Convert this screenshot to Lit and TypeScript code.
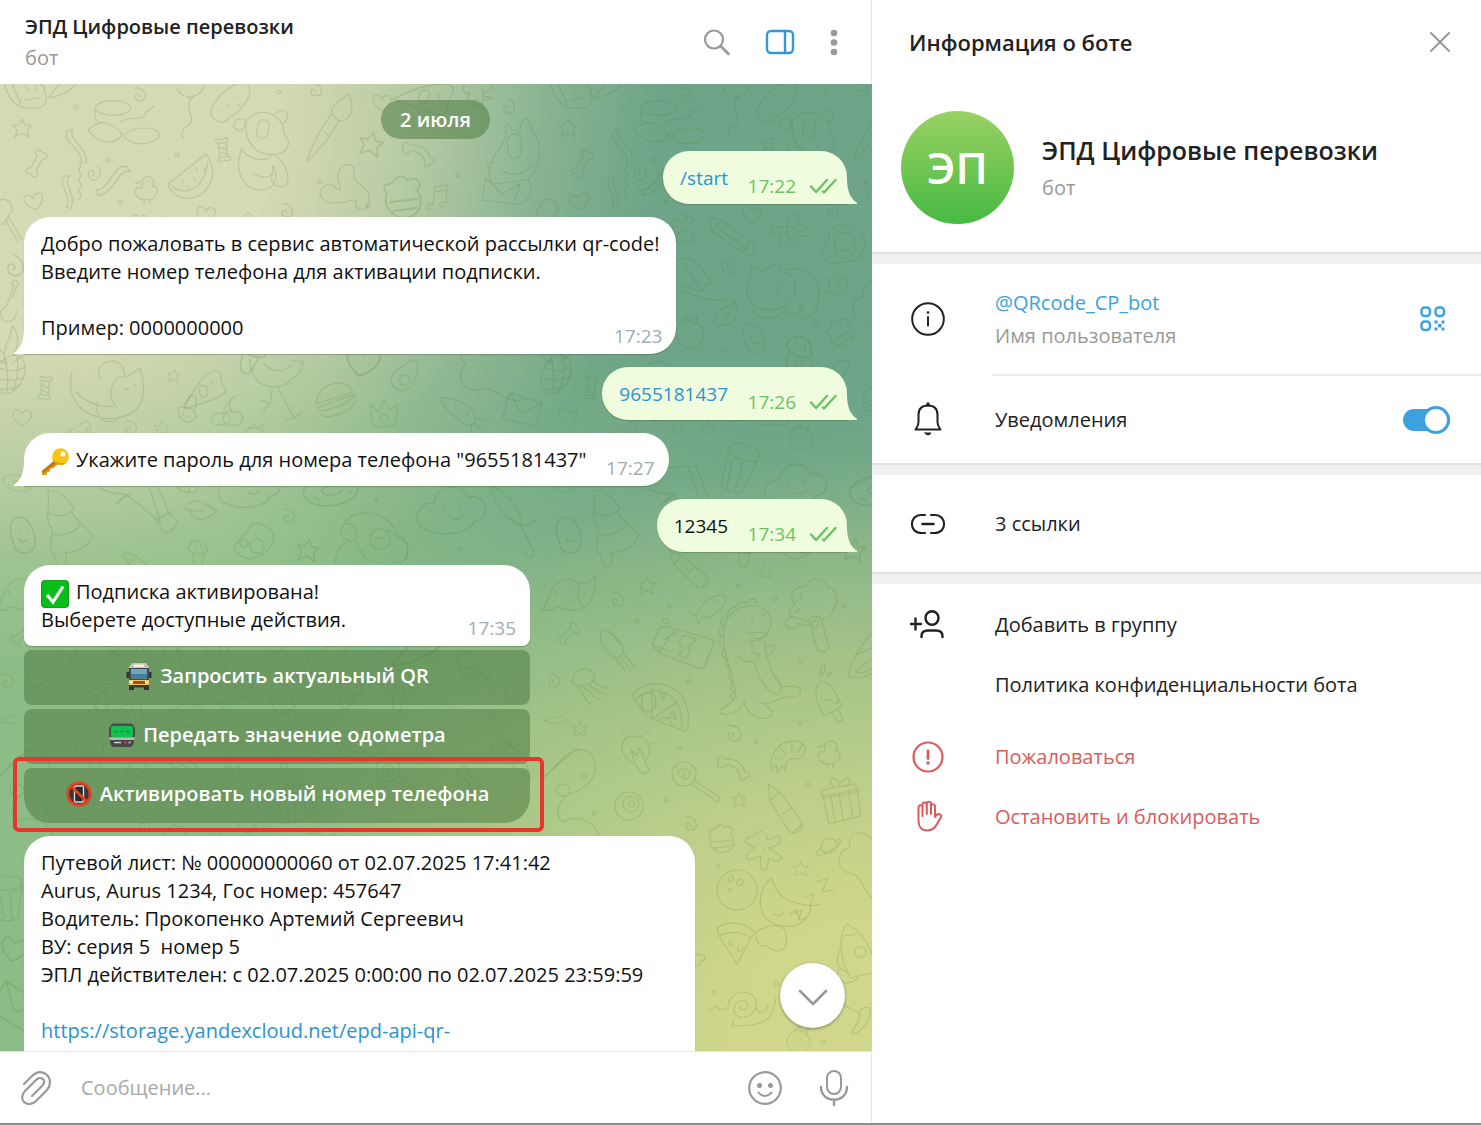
import { LitElement, html, svg, css } from 'lit';
import { customElement, property, state } from 'lit/decorators.js';
import { classMap } from 'lit/directives/class-map.js';

/* ---------- Wallpaper: line doodles on a repeating tile ---------- */

const TILE_W = 546;
const TILE_H = 1125;

const DOODLES: Record<string, string> = {
  star: 'M0-9 3-3 9-3 5 2 7 9 0 5-7 9-5 2-9-3-3-3Z',
  heart: 'M0 8C-14-1-9-10-4-8-1-7 0-4 0-4S2-9 7-7C12-5 9 3 0 8Z',
  spiral: 'M0 1C2-1-3-4-4 0-5 5 3 7 6 2 8-4 2-9-4-8',
  dot: 'M-2 0A2 2 0 1 0 2 0 2 2 0 1 0-2 0',
  bone: 'M-12-3C-16-9-8-12-7-6L7-6C8-12 16-9 12-3 16 3 8 6 7 0L-7 0C-8 6-16 3-12-3Z',
  bent: 'M-15-4C-18-10-10-12-9-7 0-8 9-4 12 6 18 6 17 13 12 12 10 17 4 14 7 9 4 1-3-2-8-1-10 4-17 2-15-4Z',
  ribbon: 'M-8-16C-16-6 8 2 5 16M-3-18C-10-8 13 0 10 16M-8-16-3-18M5 16 10 16',
  spring: 'M0-18C6-14-4-12 1-8 6-4-4-2 1 2 6 6-4 8 1 12 4 15 0 17 0 18',
  candy: 'M-4-7 4-7 4 7-4 7ZM-4-7C-9-10-5-13 0-10 5-13 9-10 4-7M-4 7C-9 10-5 13 0 10 5 13 9 10 4 7M-4-3 4 0M-4 2 4 5',
  chick: 'M-4-5A6 6 0 1 1 6-2C14-5 12 8 5 10-4 13-13 8-10 0-9-2-7-1-4-1ZM-6-8-11-6-6-5M-2 11-2 15M4 11 4 15M1-8 1-7',
  melon: 'M-22 8 16-22C30-4 20 18 2 22-10 24-20 16-22 8ZM-18 10C-8 20 14 16 18-14M-8 4-7 8M4 2 5 6M6-8 8-5M14-8 15-4M-2 10 0 13',
  pickle: 'M-20 12C-22 0 0-22 14-20 26-16 14 8-2 14-4 22-16 20-20 12ZM-4 2-3 3M6-6 7-5M-10 8-9 9M8 2 9 3',
  balloon: 'M-13-16C-10-4 10-4 14-18M-2-8 0-4 4-8M0-4C-6 8 8 14-2 22-8 24-10 32-6 34',
  bear: 'M-12-20C-4-36 26-32 26-8 36 0 28 14 14 12 2 14-14 4-12-20ZM-12-20C-20-30-30-14-20-12-16-10-14-14-12-20M18-28C26-38 36-24 24-18M-16 6C-26 32-12 50 6 48 20 46 20 30 14 24M16 12C34 26 34 48 20 44 10 42 14 32 16 24M-16 8C-6 20 10 20 14 12M-4 32C6 38 16 34 14 30M0-14A6 6 0 1 1 10-12 6 6 0 1 1 0-14',
  brush: 'M-20 36C-16 16-6-4 0-14L8-8C2 8-12 28-20 36ZM0-14C-2-26 10-28 14-36 24-24 20-8 8-8ZM-6 4 0 8',
  pizza: 'M-22 14C-12-2 4-20 14-20 24-18 14-10 22 0 24 8-2 10-22 14ZM-4-1A4 4 0 1 1 3-1 4 4 0 1 1-4-1M8-9 11-7',
  slice: 'M-18-16C-8-24 10-22 20-12L16-6 2 20-16-8ZM-16-8C-4-14 8-12 16-6M-4-4C-8 0-4 5-2 0M4 2C0 8 6 10 8 4M-1 9 2 11',
  worm: 'M-22 8C-30-2-12-10-8-2-4 2-2 0-6-10-8-30 14-30 10-14 8-4 30-6 24 14 22 24 8 20 12 10 6 10-16 18-22 8Z',
  jar: 'M-16-14A17 7 0 1 0 18-10 17 7 0 1 0-16-14M-16-12C-20 0-14 4-8 2M-24 10C-10-2 0 2 10 14 6 26-14 24-24 10ZM8 2C20-6 30 4 34-8L42-14M10 14C18 28 44 26 48 14 42 6 22 6 14 14',
  dragon: 'M-20-14C-16 4-6 14 8 12 20 14 26 4 20-4 22-8 18-12 12-14M-14-14C-8-10-12-4-6-2-10 2-2 2-4 8M2-10 4-5M12-10 13-6M2 4 14 2',
  horn: 'M-14 8C2 6 14-2 18-14M-14 8C-6-4 4-10 8-16',
  cake: 'M-12-14C-20-20-4-28 0-22 10-28 18-18 12-12M-14-12C-4-8 8-10 14-14L10 18C2 22-8 22-10 16ZM-8-6-4 18M2-8 4 20',
  dog: 'M-24 26C-34 6-16-6-10-22-12-34-8-40-4-28L4-26C4-42 14-44 16-28 30-12 22 14 12 22ZM-8-12A7 9 0 1 1 5-12 7 9 0 1 1-8-12M-26 10C-32 8-28 2-22 4M-30 20-34 42-2 46 4 26-14 36ZM-14 12C-4 20 10 16 16 6M12 22C20 34 10 48-2 46',
  envelope: 'M-18-12 16-16 20 8-14 14ZM-18-12 2 2 16-16',
  music: 'M-6 8-4-10 8-12 7 6M-6 8C-14 4-14 14-8 12M7 6C-1 2-1 12 5 10M-4-5 8-7',
  paw: 'M-8 12C-10 2 0-4 6 2 12 8 8 14 2 10-2 8-4 16-8 12ZM-9-3A3 4 0 1 1-8-4M-2-8A3 4 0 1 1-1-9M6-7A3 4 0 1 1 7-8',
  pencil: 'M-22-20-20-6 14 20C20 22 26 14 20 8L-10-16ZM-20-6-10-16M10 16 18 6M-16-10 14 14',
  plane: 'M-4-2C-2-20 10-22 8-6 24 0 24 8 8 6 2 20-16 20-8 6-26 2-22-6-4-2ZM-3 2A4 4 0 1 1 4 2 4 4 0 1 1-3 2',
  egg: 'M-14-6C-14-22 6-20 10-14 28-12 20 2 20 8 14 22-4 16-8 20-22 18-26 6-14-6ZM-8 2A10 10 0 1 1 11 2 10 10 0 1 1-8 2M-2-1-2 0M5-1 5 0M-3 4C-1 8 5 8 6 4',
  shark: 'M-30 14C-20-26 0-28 22 2L16 4 14 12-6 8M-30 14C0 10 12 22 38 16M-10-14C0-4 8 2 14 12',
  cat: 'M-30 0C-30-12-24-14-26-24L-14-18 0-28 4-18C26-16 22 18-4 20-22 20-30 14-30 0ZM8-20C34-28 52 0 36 24 24 36 18 22 26 12M-24 18C-26 30 0 32 6 22M-12-4-8-2M0-8 2-4M-4 2C-2 6 2 4 2 0M8 20C16 28 28 24 26 12',
  leaf: 'M-10 8C-12-8 2-6 10-14 14-2 10 12-4 10L-10 14M-4 10 4-2',
  berry: 'M-12-8C-20 6-8 18 4 16 16 12 18-4 8-10 2-14-8-14-12-8ZM-10-10-4-18 0-12 8-18 6-10 12-8M-6-2-6-1M2-4 2-3M-2 6-2 7M6 4 6 5M-8 4-8 5M0 11 0 12',
  bug: 'M-8-4C-4-12 8-10 10 0 8 12-8 12-10 2ZM-8-4-12-8M0-9 0-13M9-4 13-7M10 4 14 6M-9 5-13 8M-2-4 2 0M2 4 6 4M-4 4-3 5',
  bean: 'M-8-12C0-18 12-6 12 8 10 18-4 18-6 8-8 4-14-6-8-12ZM-2-2-2-1M5-2 5-1M-1 4C1 8 4 6 5 4',
  grid: 'M-14 6C-16-10-2-24 8-18 20-10 14 16 0 20-8 22-14 14-14 6ZM-12-4C-2-2 8-4 14-10M-14 6C-4 8 8 6 15 0M-8 17C0 16 8 14 12 8M-6-12C-2 0 0 10 0 20M4-18C8-6 8 6 6 16',
  girl: 'M-40-14C-48 20-20 36 6 32 36 26 34 2 28-18L16-10 4-8C-2 2-4 12 4 20M-12-6A13 13 0 1 1 12-8M-14 16C-20 34 0 42 8 30M12 2 16 4M22-2 24 0M-36 6C-24 18-10 22 4 20',
  bird: 'M-24-22C-26 10 8 14 18-2 28-4 26-14 30-18L16-20M-10-16C0-6 12-8 18-16M-2 10-4 24-14 20M-4 24-10 30M4 8 20 38 12 40M20 38 28 32',
  burger: 'M-20 0C-18-20 16-24 18-6ZM-20 4 20-4C22 0-16 14-20 4ZM-18 10C-12 20 20 12 20 0M-8-8-7-8M0-12 1-12M6-8 7-8',
  avocado: 'M4-18C14-24 14-8 10 2 6 18-14 16-12 0-10-10-2-10 4-18ZM-4 2A5 5 0 1 1 6 2 5 5 0 1 1-4 2',
  crown: 'M-12 10-14-10-6-2 0-14 6-4 14-10 12 10C4 14-6 14-12 10ZM-4 4A4 4 0 1 1 4 4 4 4 0 1 1-4 4',
  cherry: 'M-8 2A6 6 0 1 1-8 12 6 6 0 1 1-8 2M4 0A7 7 0 1 1 4 13 7 7 0 1 1 4 0M-6 2C-4-8 2-14 6-16M4 0C-2-6 0-12 6-16',
  carrot: 'M-22-16C-6-18 12-6 14 4 12 14 4 12 0 8-10 2-18-6-22-16ZM14 4 24 6M12 8 20 16M9 11 10 20M-8-12-6-8M4 4 6-2',
  tree: 'M-20-40C-8-40 0-30 6-22-2-16 16-6 24 4 24 18 2 24-2 22L-2 34C-8 40-12 34-14 24-22 20-14 6-16-2-24-8-18-20-20-40ZM-20-18C-14-12 0-14 4-20M-16 4C-4 8 10 0 12-6',
  chute: 'M-44-34C-34-8-18-2 2-2L-8 8 6-2M-44-34C-20-24 10-30 26-30L46 20M2-2 36 26M18-30 36 24M32 24 46 16 54 26C50 34 44 38 40 36Z',
  cloud: 'M-22 20C-40 16-30-8-16-4-16-22 10-24 14-10 34-14 36 10 20 12 16 24-10 26-22 20ZM-8-2-6 2M6-4 8 0M-2 8C2 12 8 10 10 6',
  camera: 'M-20 6-2-16C4-20 16-14 20-6 20 8 8 14-2 18-10 18-20 12-20 6ZM-4 6A7 7 0 1 1 10 4 7 7 0 1 1-4 6M-14 2A4 4 0 1 1-6 2 4 4 0 1 1-14 2',
  shroom: 'M-10-2C-8-14 8-14 10 0 4 4-6 4-10-2ZM-6 3-4 14C0 18 4 16 4 12L6 3M-4-6-2-4M3-6 4-3',
  monkey: 'M-28-18C-20-34 14-34 24-10 40 0 40 22 24 20M-28-18C-36-6-24 2-16-2-12-12-20-20-28-18M-2-4A10 10 0 1 1 18-2 10 10 0 1 1-2-4M-22-2C-46 10-34 34-28 34M16-12 36 2 34 16M-14 4C-8 12-8 18 0 20M2-3 12-4',
  umbrella: 'M-34-40C-16-34-2-14-4 0L-16-8M-34-40C-30-20-18-4-4 0M-4 0C10-2 12-6 8-8M-4 0 8 24C12 34 0 32 0 26',
  dino: 'M-25-35C-20-58 20-62 21-38 20-24 12-18-2-20M-5-27 17-28C14-20 4-20 0-25M1-42 3-38M12-48 14-45M-25-35C-30-10-18 10-15 30-12 42-22 44-30 50-32 58-14 56-6 42-2 60 20 62 22 54 22 48 16 46 12 43 20 46 28 38 36 37 48 38 52 34 50 28 44 24 36 28 32 26 20 16 16-6 14-20M5 3C8 20 20 36 28 34 34 30 30 22 26 16M-12-5C-8 4 8 4 9-4 8-8 2-6 2-8L2-18M16-12C24-20 28-8 18-5M-4-57C0-63 6-62 8-57M-15-52C-12-60-6-59-4-57M-23-43C-22-52-16-54-15-52M-26-33C-32-36-28-44-23-43M-27-23C-33-26-32-32-26-33M-25-11C-32-13-32-21-27-23M-22 0C-29-2-29-10-25-11M-18 11C-25 9-26 2-22 0M-16 22C-22 21-22 13-18 11M-15 32C-20 32-20 24-16 22M-16 40C-21 40-20 34-15 32',
  broccoli: 'M-22 4C-28-4-14-8-20-12-26-24-10-28-8-26-4-38 14-36 14-26 28-24 24-8 20-4 20 4 10 8 2 4M-4 8C-4 2 8 2 8 6L16 34C14 40 6 40 4 36ZM-1 11A3 4 0 1 1 5 11 3 4 0 1 1-1 11M-4 8C-12 8-12 4-14 6-18 2-28 4-27 11-25 18-14 17-15 10L-4 13M-16-12C-12-14-10-18-12-20M-18 0-13-4',
  fox: 'M-27 14C-18 12-20-14-2-18 6-20 10-12 14-14 22-12 26-18 28-22 30-8 26 6 14 12 2 16-4 10-10 10-18 16-24 12-27 14ZM14-14C8-6 12 8 18 12M-13-6-11-2M2-13 4-13M2 4 4 4',
  fish: 'M-14 10C-8-4 4-14 16-10 16 2 2 12-8 12L-12 18-14 10-20 6ZM4-6 5-5',
  chest: 'M-14-20 28-8C31-6 31-4 30-2L22 18C21 21 19 22 16 21L-24 6-31-2-24-18C-22-21-18-21-14-20ZM-24 6-8-18M-31-2-14 4M-18-8-6-15M0-12 14-8 10-4 4 0 8 4 2 12-4 8 0 2-4-4ZM-21-26C-17-32-11-26-16-23Z',
  squid: 'M-16-20C-2-16 8-4 6 4 0 10-4 8-6 6-16-2-18-12-16-20ZM6 4 18 18M3 7 14 22M0 8 8 22M-3 7 2 16M-8-18 2-6',
  jelly: 'M-14 0C-18-14 2-22 8-8 8-2 0 4-14 0ZM-10 2C-2 8-6 14 4 20M-5 2C2 6 4 12 14 16M2 0C8 6 10 8 20 10M6-3C14 2 14 4 22 4',
  half: 'M-28-12C-10-34 34-24 28 20 28 24 26 24 24 24L-8 12C-18 6-22-4-28-12ZM-24-8C-8-24 24-18 22 22M-8-19-8 12 16-4M-18-5A7 7 0 1 1-5-5 7 7 0 1 1-18-5M0-14 6-13 3-8ZM8 10 13 4 16 12ZM0 14C2 8 10 10 12 18',
  popsicle: 'M-13-4C-14-22 0-18 6-6L13 8-4 18C-10 10-13 4-13-4ZM3 14 8 24 14 22 9 10M-8 0C-4 6 0-2 3 4 6 8 10 4 9 2M-8-22C-10-28-8-34-5-34-2-28-6-24-8-22M-2-22C-2-26 2-26 4-26 2-22 0-22-2-22',
  sail: 'M-22 16C-16-8 0-30 20-40 30-20 20 10-10 18ZM-16-4 20-20M-14 12C-4 0 10-6 6 6 0 12-10 14-14 12Z',
  bulb: 'M-2 12C-20 4-18-16-4-16 14-16 16-2 8 10L12 18C8 24 4 22 2 18ZM-2 12-6-2 0 4 2-4 6 2 8 10M-20-10-23-11M14-8 17-9M-2-24-3-26M-14-20-15-22M10-20 12-22M-17 6-19 7',
  shrimp: 'M-18 14C-22 0-10-16 6-14 20-12 16 4 6 4-2 2-6 8-4 16L-8 10-12 18-14 10ZM-10-8-4 0M2-14 2-2M12-10 8-2M-16 2-8 4',
  lollipop: 'M-24-10A12 12 0 1 1 0-10 12 12 0 1 1-24-10M-18-10C-18-18-4-16-6-8-10-2-16-6-12-10M-2-4 24 14 22 18-5 0',
  eye: 'M-14 0A14 14 0 1 1 14 0 14 14 0 1 1-14 0M-6-2A8 8 0 1 1 10-2 8 8 0 1 1-6-2M0-2A3 3 0 1 1 6-2 3 3 0 1 1 0-2',
  crayon: 'M-18-24-6-16 16 14C18 24 8 28 2 22L-16-8ZM-16-8-6-16M-4 6 6 0M8 24 16 16',
  gift: 'M-18-8 16-14 20 12-12 20ZM-20-14 14-20 18-12-18-6ZM-8-18C-18-28 0-28-2-18 2-30 14-26 6-18M-10-8-6 18M-2-10 2 16M8-12 12 14',
  palette: 'M-30-10C-16-28 4-50 18-36 30-18 14 0-4 4-14 10-20 24-10 32 8 22 24 36 26 46M-17 0A7 6 0 1 1-3 0 7 6 0 1 1-17 0M8-14A3 3 0 1 1 14-14 3 3 0 1 1 8-14M-28-14 4-42',
  honey: 'M-12-2C-16 8-6 16 2 14 12 12 12 2 8-4 14-10 4-14 2-10-4-18-8-8-10-8-16-8-14-4-12-2ZM-10 4 8 2M-8 10 8 8',
  ginger: 'M-8-14C-4-22 6-18 4-10L16-14C20-8 14-4 6-2L18 6C20 12 12 12 6 8L4 20C-2 22-4 16-2 6L-14 10C-20 6-16 2-8-2L-18-8C-16-14-12-14-8-14ZM-4-12-3-11M1 0 2 1',
  planet: 'M-8 2C-8-10 6-10 8-2 8 8-6 10-8 2ZM-8 2C-18 12-8 10 0 6 10 0 16-8 8-6',
  ball: 'M-20 0A20 20 0 1 1 20 0 20 20 0 1 1-20 0M-8-12C-10-6-4-6-4-12-4-16-6-16-8-12M0-8C-2-2 6-4 6-8 6-12 2-12 0-8M-8-2C-12 4-4 2-6-2',
  moon: 'M-14-34C-8-14 4-10 24-8 20 20-16 14-22 0-28-14-22-28-14-34ZM-12 0-6 2-2-2M-22 14C-34 16-28 34-18 30-10 40 4 34 0 22 2 12-10 8-22 14ZM4 0 10-4 12 4',
  zzz: 'M-14 14-6 10-10 20-2 18M-4-2 6-6 2 6 12 4M8-18 20-22 14-8 26-10',
  rocket: 'M-12-24C4-18 16 2 18 24L-8 30C-18 10-20-10-12-24ZM-18 2C-24 14-20 22-10 24M-14-12-2-14M-3 4A5 5 0 1 1 8 4 5 5 0 1 1-3 4M-18 20C-28 34-10 40 0 30',
  snail: 'M-18 4C-20-18 12-20 10 0 6 16-14 14-12 2-10-6 2-8 2 0 0 6-8 4-6 0M-12 14-14 20C8 20 26 18 28 0M10 2C14 10 22 6 22-2M28 0 30-8M-36 4-30 0-26 4-20 2',
  glass: 'M-16-22C-8-4-2-2 8 2 16 6-2 24 2 24 12 24 22 6 20-2 14-4 10 0 8 4M-16-22-8-16',
  puff: 'M20 40C0 36 2 14-10 12-30 8-24-14-12-14-16-32 4-32 8-24L20-28',
  lens: 'M-12-6A9 9 0 1 1 2 2 9 9 0 1 1-12-6M2 2 16 26M-1 5 12 28',
  key: 'M-8 16C-14 6-2 8-2 0L4-16M-8 16C-4 24 8 18 6 8M2-4 8-18M4-16A3 3 0 1 1 8-18',
  herb: 'M-8 20C-14 4-2-4-2-18 8-8 2 4 0 12 6 4 12 0 18 2 16 10 4 14-2 20M-8 20C-16 16-20 10-18 4-12 6-8 12-8 20',
  donut: 'M-22-2C-20-16 18-16 20 0 20 14-20 14-22-2ZM-8-2C-6-6 8-6 8-1 6 4-6 3-8-2M-14 2-10 5M12 4 15 2',
};

type Spot = [string, number, number, number?, number?];

const SPOTS: Spot[] = [
  ['dragon', 24, 96], ['horn', 62, 90], ['spiral', 139, 96], ['dot', 76, 107], ['star', 22, 128], ['bone', 34, 162, 118],
  ['ribbon', 76, 147], ['jar', 112, 120], ['spring', 79, 181], ['ribbon', 67, 192, 20, 0.9], ['spiral', 93, 174, 60],
  ['ribbon', 112, 180, 75, 1.1], ['chick', 146, 189], ['heart', 34, 202, -15], ['melon', 190, 176], ['candy', 223, 150, -8],
  ['balloon', 190, 104], ['pickle', 231, 103], ['bear', 258, 142], ['spiral', 315, 91], ['brush', 330, 128, 6],
  ['star', 371, 144, 12, 1.3], ['heart', 382, 103], ['pizza', 424, 98, 30, 1.2], ['bent', 418, 152], ['worm', 344, 190],
  ['honey', 405, 196, 0, 1.5], ['dog', 516, 158], ['music', 439, 197], ['spiral', 508, 108, 20], ['dot', 458, 175],
  ['dot', 177, 155], ['dot', 108, 160], ['dot', 320, 182], ['dot', 368, 206], ['dot', 120, 202], ['dot', 279, 92],
  ['chick', 478, 90, 180, 1.3], ['heart', 206, 215], ['spiral', 286, 212],
  ['paw', 139, 230], ['pencil', 186, 236, -2], ['plane', 244, 230], ['egg', 297, 244], ['shark', 144, 278, 10],
  ['spiral', 182, 266, 160], ['cat', 231, 290], ['bug', 292, 286], ['leaf', 179, 315], ['berry', 144, 333, 0, 0.95],
  ['bean', 207, 338], ['honey', 296, 332, -25], ['shroom', 252, 352, 20, 1.4], ['dot', 270, 324], ['puff', 330, 310],
  ['dot', 179, 350], ['lens', 6, 214], ['key', 10, 302], ['spiral', 14, 268, 30, 1.4], ['herb', 14, 344],
  ['grid', 10, 374, 10], ['candy', 45, 388, 6], ['heart', 22, 418], ['girl', 112, 386], ['star', 174, 376, 8, 0.7],
  ['pizza', 204, 392, -8], ['bird', 274, 380], ['burger', 336, 401, -8], ['heart', 362, 362, 12, 1.8], ['avocado', 404, 378, 8],
  ['crown', 384, 414], ['cherry', 229, 412], ['shroom', 188, 411, 200], ['puff', 485, 372, -30, 1.1],
  ['carrot', 462, 414], ['envelope', 521, 411, 24], ['spiral', 130, 429], ['star', 162, 428, 0, 0.8], ['melon', 72, 436, 10, 0.8],
  ['berry', 255, 438, 8, 0.8], ['cake', 192, 470, 20, 1.1], ['cloud', 250, 484], ['chute', 124, 496], ['donut', 18, 484, 12, 0.7],
  ['bean', 22, 534, 10, 1.2], ['tree', 68, 530], ['leaf', 200, 509, 60], ['donut', 332, 492, -10, 1.3],
  ['spiral', 288, 517], ['camera', 254, 541], ['star', 308, 550, 8, 1.2], ['shroom', 198, 551], ['monkey', 372, 542],
  ['cloud', 452, 508, 0, 1.1], ['umbrella', 525, 526], ['dot', 376, 500], ['dot', 460, 549],
  ['crayon', 144, 568, -15, 0.9], ['star', 219, 572, 0, 0.7], ['fox', 21, 597], ['star', 101, 586, 0, 0.9],
  ['spiral', 71, 601], ['fish', 164, 606], ['broccoli', 267, 613], ['dino', 204, 660], ['chest', 137, 647], ['dot', 123, 606],
  ['dot', 298, 606], ['dot', 229, 599], ['dot', 192, 586], ['dot', 91, 621], ['bone', 24, 636, -42, 0.9], ['squid', 71, 649],
  ['jelly', 41, 684], ['spiral', 7, 682], ['half', 114, 707], ['popsicle', 283, 698], ['dot', 143, 682], ['dot', 255, 661],
  ['sail', 324, 660], ['heart', 512, 691, 20], ['bulb', 400, 688, 30], ['shroom', 350, 690, 20, 1.2], ['horn', 420, 650, 0, 2],
  ['jelly', 470, 668, 20], ['bulb', 91, 752], ['spiral', 187, 735, 0, 1.2],
  ['bent', 187, 766], ['shrimp', 244, 755], ['chick', 283, 753], ['dot', 262, 784], ['dot', 133, 748], ['dot', 120, 800],
  ['dot', 254, 723], ['dot', 210, 742], ['dot', 48, 813], ['star', 34, 729, 0, 0.8], ['horn', 8, 721, 30, 0.6], ['palette', 27, 790],
  ['lollipop', 150, 784], ['eye', 83, 806], ['star', 193, 800, 0, 0.8], ['crayon', 240, 808], ['gift', 295, 804],
  ['spiral', 144, 825], ['honey', 177, 838], ['ginger', 217, 850], ['planet', 283, 846], ['star', 255, 869, 0, 0.8],
  ['ball', 191, 890], ['moon', 240, 914, 0, 1.05], ['zzz', 262, 900], ['slice', 189, 944], ['rocket', 312, 948],
  ['puff', 316, 862], ['snail', 200, 1006], ['glass', 304, 1010], ['berry', 253, 1041, 15, 0.8], ['dot', 168, 993],
  ['dot', 231, 984], ['dot', 277, 1042], ['dot', 172, 866], ['bone', 144, 956, 40], ['melon', 360, 740, 40],
  ['lollipop', 400, 780], ['bone', 466, 780, 50], ['umbrella', 500, 742, 180, 0.9],
  ['heart', 14, 950, 10, 1.4], ['cake', 8, 900], ['envelope', 14, 1008, 40, 1.3],
];

const wallpaper = () => html`
  <svg class="doodles" aria-hidden="true" width="100%" height="100%">
    <defs>
      <pattern id="tile" width=${TILE_W} height=${TILE_H} patternUnits="userSpaceOnUse" patternTransform="translate(0,-84)">
        ${[-TILE_W, 0, TILE_W].map((dx) =>
          SPOTS.filter(([, x]) => x + dx > -60 && x + dx < TILE_W + 60).map(
            ([name, x, y, r = 0, s = 1]) => svg`<path class="line" d=${DOODLES[name]}
              transform="translate(${x + dx},${y}) rotate(${r}) scale(${s})"></path>`
          )
        )}
      </pattern>
    </defs>
    <rect width="100%" height="100%" fill="url(#tile)"></rect>
  </svg>
`;

/* ---------- Icons ---------- */

const icon = (w: number, h: number, body: unknown) =>
  html`<svg class="icon" width=${w} height=${h} viewBox="0 0 ${w} ${h}" fill="none" stroke="currentColor"
    stroke-width="2" stroke-linecap="round" stroke-linejoin="round" aria-hidden="true">${body}</svg>`;

const icons = {
  search: icon(28, 28, svg`<circle cx="12" cy="11.500" r="9" stroke-width="2.2"/><path d="M18.500 18 26.500 26" stroke-width="2.6"/>`),
  panel: icon(30, 26, svg`<rect x="2" y="2" width="26" height="22" rx="4" stroke-width="2.4"/><path d="M20 2V24" stroke-width="2.4"/>`),
  dots: icon(8, 28, svg`<g fill="currentColor" stroke="none"><circle cx="4" cy="5" r="3.300"/><circle cx="4" cy="14.500" r="3.300"/><circle cx="4" cy="24" r="3.300"/></g>`),
  close: icon(20, 20, svg`<path d="M1 1 19 19M19 1 1 19"/>`),
  clip: icon(32, 36, svg`<path d="M3 14 11 6C16 1 22 1 26 5 30 9 30 15 26 20L15 31C11 35 6 35 3 32 0 29 1 24 4 21L15 10C18 7 20 8 22 9 24 11 23 14 21 16L11 26" stroke-width="2.200"/>`),
  smile: icon(36, 36, svg`<circle cx="18" cy="18" r="15.800" stroke-width="2.200"/><g fill="currentColor" stroke="none"><circle cx="12.500" cy="15.500" r="2.500"/><circle cx="23.500" cy="15.500" r="2.500"/></g><path d="M11.500 22.500C15 27 21 27 24.500 22.500"/>`),
  mic: icon(30, 38, svg`<rect x="8" y="2" width="14" height="23" rx="7"/><path d="M2 18C2 35 28 35 28 18M15 31V36" stroke-width="2.400"/>`),
  down: icon(32, 20, svg`<path d="M3 3 16 16 29 3" stroke-width="2.600"/>`),
  info: icon(36, 36, svg`<circle cx="18" cy="18" r="15.800"/><path d="M18 16V24.500"/><circle cx="18" cy="11.500" r="1.300" fill="currentColor" stroke="none"/>`),
  bell: icon(36, 36, svg`<path d="M5.500 27.500C7 25 8.500 24 8.500 20V13C8.500 7 12 3.500 18 3.500S27.500 7 27.500 13V20C27.500 24 29 25 30.500 27.500Z"/><path d="M18 2V3" stroke-width="3.400"/><path d="M15 31H21C20 33.500 16 33.500 15 31Z" fill="currentColor" stroke-width="1"/>`),
  link: icon(36, 36, svg`<path d="M15 9H11.500C-1.300 9-1.300 27 11.500 27H15M21 9H24.500C37.300 9 37.300 27 24.500 27H21" stroke-width="2.200"/><path d="M12.500 18H23.500" stroke-width="2.600"/>`),
  group: icon(36, 36, svg`<ellipse cx="22" cy="11" rx="6.500" ry="6.800" stroke-width="2.400"/><path d="M11.500 30V29C11.500 25.500 14 23.500 18 23.500H26C30 23.500 32.500 25.500 32.500 29V30M0 17H11M5.500 11.500V22.500" stroke-width="2.400"/>`),
  alert: icon(36, 36, svg`<circle cx="18" cy="18" r="14.500" stroke-width="2.200"/><path d="M18 12V19.500" stroke-width="2.800"/><circle cx="18" cy="24" r="1.700" fill="currentColor" stroke="none"/>`),
  hand: icon(36, 36, svg`<path d="M12.500 17V8C12.500 5.500 8.500 5.500 8.500 8.500V22C8.500 28 12 31.500 17 31.500 22 31.500 25 29 27 25L31 18C32 15.500 28.500 14 26.500 16L25 18V7.500C25 5 21 4.500 21 7M12.500 9V5.500C12.500 2.800 16.800 2.800 16.800 5.500V15M16.800 6V4.500C16.800 2 21 2 21 4.500V15"/>`),
  qr: icon(28, 28, svg`<g stroke-width="2.400"><rect x="2.500" y="2.500" width="8.500" height="8.500" rx="3.200"/><rect x="16.500" y="2.500" width="8.500" height="8.500" rx="3.200"/><rect x="2.500" y="16.500" width="8.500" height="8.500" rx="3.200"/></g><g fill="currentColor" stroke="none"><rect x="15.500" y="15.500" width="3" height="3"/><rect x="22.500" y="15.500" width="3" height="3"/><rect x="19" y="19" width="3.400" height="3.400"/><rect x="15.500" y="22.500" width="3" height="3"/><rect x="22.500" y="22.500" width="3" height="3"/></g>`),
  read: icon(28, 18, svg`<path d="M2 9.500 7 15 18 3M14 14.500 15 15.500 26.500 3" stroke-width="2.400"/>`),
};

const emoji = (body: unknown) =>
  html`<svg class="emoji" width="28" height="28" viewBox="0 0 28 28" aria-hidden="true">${body}</svg>`;

const emojis = {
  key: emoji(svg`
    <path d="M14 12 1 23V27H5.500L6 24 9 23.500 9.500 20.500 12.500 20 18 15Z" fill="#d79a17"/>
    <path d="M14 12 1 23 2 25 17 14Z" fill="#b87c0d"/>
    <circle cx="19.500" cy="8.800" r="8.500" fill="#f5c518"/>
    <path d="M11.500 11C13 16 20 19 25.500 15 22 16 15 15 11.500 11Z" fill="#dc9f12"/>
    <circle cx="22" cy="6" r="2.600" fill="#fff"/>`),
  check: emoji(svg`
    <rect x="0" y="0" width="28" height="28" rx="4" fill="#1a9a1f"/>
    <rect x="1" y="1" width="26" height="26" rx="3" fill="#06c017"/>
    <path d="M6 15 12 22 22 6.500" fill="none" stroke="#fff" stroke-width="3.200"/>`),
  bus: emoji(svg`
    <path d="M4 24H9V28H4ZM19 24H24V28H19Z" fill="#333"/>
    <path d="M1.500 10H4V16H1.500ZM24 10H26.500V16H24Z" fill="#333"/>
    <path d="M7 1H21L24 5V24H4V5Z" fill="#c9c4ba"/>
    <path d="M9 2.500H19V5H9Z" fill="#f6efe2"/>
    <path d="M4 6H24V19H4Z" fill="#444b50"/>
    <path d="M6 7H22V17H6Z" fill="#6aa6c4"/><path d="M6 12H22V17H6Z" fill="#467d99"/>
    <path d="M4 18H24V23H4Z" fill="#f3c46a"/><path d="M8 19H20V22H8Z" fill="#a3520f"/>
    <path d="M4 23H24V25.500H4Z" fill="#3b3b3b"/><path d="M5 19H8V21H5ZM20 19H23V21H20Z" fill="#fff3c4"/>`),
  pager: emoji(svg`
    <path d="M4 2.500H24L27 7V16H1V7Z" fill="#4b4d4f"/>
    <rect x="3" y="5" width="22" height="11" rx="2" fill="#12c150"/>
    <path d="M6 10.500H10M12 10.500H16M18 10.500H22" stroke="#0c9a3c" stroke-width="1.500"/>
    <path d="M1 16.500H27L25 20H3Z" fill="#b7b9bb"/>
    <path d="M2 19H26C26 24 24 26 22 26H6C4 26 2 24 2 19Z" fill="#46484a"/>
    <path d="M6 21.500H13" stroke="#d0d0d0" stroke-width="1.500"/><circle cx="17.500" cy="21.500" r="1.300" fill="#e23b3b"/><circle cx="21.500" cy="21.500" r="1.300" fill="#999"/>`),
  nophone: emoji(svg`
    <circle cx="14" cy="14" r="12" fill="#383838"/>
    <rect x="9.500" y="6" width="9" height="16" rx="1.500" fill="#2a2a2a" stroke="#d8d8d8" stroke-width="1.400"/>
    <circle cx="14" cy="14" r="11.200" fill="none" stroke="#e2411f" stroke-width="2.800"/>
    <path d="M6.500 6.500 21.500 21.500" stroke="#e2411f" stroke-width="2.800"/>`),
};

/* ---------- Elements ---------- */

const base = css`
  :host { display: block; box-sizing: border-box; }
  *, *::before, *::after { box-sizing: border-box; }
  button { font: inherit; color: inherit; background: none; border: 0; padding: 0; cursor: pointer; }
  a { color: #2b93d1; text-decoration: none; }
  p, h1, h2 { margin: 0; font: inherit; }
  svg { display: block; flex: none; }
`;

@customElement('chat-message')
class ChatMessage extends LitElement {
  @property() time = '';
  @property({ type: Boolean }) outgoing = false;
  @property({ type: Boolean }) inline = false;
  @property({ type: Boolean }) tail = false;

  static styles = [base, css`
    :host { display: flex; }
    :host([outgoing]) { justify-content: flex-end; }
    :host([stretch]) .bubble { flex: 1; }
    .bubble {
      position: relative; display: grid; padding: 13px 14px 12px 17px; border-radius: 26px;
      background: #fff; color: #111; box-shadow: 0 1px 1px rgba(60, 90, 50, .35);
      font-size: 20px; line-height: 28px;
    }
    .bubble.out { background: #effdde; font-size: 19px; }
    .bubble.tail { border-bottom-left-radius: 0; }
    .bubble.out.tail { border-bottom-left-radius: 26px; border-bottom-right-radius: 0; }
    .bubble.tail::after {
      content: ''; position: absolute; left: -10px; bottom: 0; width: 11px; height: 26px;
      background: inherit; clip-path: path('M10 0C10 13 7 20 0 25V26H11V0Z');
    }
    .bubble.out.tail::after { left: auto; right: -10px; clip-path: path('M1 0C1 13 4 20 11 25V26H0V0Z'); }
    :host([stretch]) .bubble { border-radius: 26px 26px 8px 8px; }
    :host([open]) .bubble { border-radius: 26px 26px 0 0; }
    .body, .meta { grid-area: 1 / 1; }
    .body { padding-right: 3px; }
    .inline .body { padding-right: 68px; }
    .inline.out .body { padding-right: 105px; }
    .meta {
      place-self: end; display: flex; align-items: center; gap: 13px;
      color: #a0acb6; line-height: 26px; margin-bottom: -7px; font-size: 19px;
    }
    .out .meta { color: #6cc264; margin-right: -4px; }
  `];

  render() {
    return html`
      <div class=${classMap({ bubble: true, out: this.outgoing, inline: this.inline, tail: this.tail })}>
        <div class="body"><slot></slot></div>
        ${this.time ? html`<span class="meta"><time>${this.time}</time>${this.outgoing ? icons.read : ''}</span>` : ''}
      </div>`;
  }
}

@customElement('chat-view')
class ChatView extends LitElement {
  static styles = [base, css`
    :host { display: flex; flex-direction: column; min-width: 0; min-height: 0; border-right: 1px solid #e7e7e7; }
    .top { display: flex; align-items: center; justify-content: space-between; height: 84px; padding: 0 33px 0 25px; background: #fff; flex: none; }
    .title { padding-top: 2px; font-weight: 600; font-size: 20px; line-height: 30px; color: #222; }
    .sub { font-size: 20px; line-height: 32px; color: #999; }
    .tools { display: flex; align-items: center; gap: 35px; color: #999; }
    .tools .on { color: #3497d9; }
    .stage {
      position: relative; flex: 1; min-height: 0; overflow: hidden; margin-right: -1px;
      background:
        radial-gradient(ellipse 76% 56% at 0% 4%, #d5d9b4 0 42%, rgba(213, 217, 180, .66) 62%, rgba(213, 217, 180, .22) 82%, rgba(213, 217, 180, 0) 100%),
        radial-gradient(ellipse 75% 62% at 100% 100%, #d0d68b 0 22%, rgba(208, 214, 139, 0) 100%),
        radial-gradient(ellipse 75% 62% at 90% 15%, #6ea588 0 30%, rgba(110, 165, 136, 0) 100%),
        #8dbd86;
    }
    .doodles { position: absolute; inset: 0; }
    .line { fill: none; stroke: rgba(66, 105, 20, .17); stroke-width: 1.2; stroke-linecap: round; stroke-linejoin: round; }
    .feed { position: relative; display: flex; flex-direction: column; gap: 13px; padding: 16px 25px 0 24px; }
    .date {
      align-self: center; margin-bottom: -1px; padding: 0 19px; border-radius: 20px; background: rgba(84, 127, 72, .58);
      color: #fff; font-weight: 600; font-size: 20px; line-height: 39px;
    }
    .with-keys { display: flex; flex-direction: column; gap: 4px; width: 506px; max-width: 100%; }
    .key {
      position: relative; display: flex; align-items: center; justify-content: center; gap: 7px; width: 100%; height: 55px;
      padding: 0 0 4px; border-radius: 8px; background: rgba(84, 127, 72, .58); color: #fff; font-weight: 600; font-size: 20px;
    }
    .key:last-child { border-radius: 8px 8px 26px 26px; }
    .mark { position: absolute; inset: -11px -14px -9px -11px; border: 4px solid #e8362c; border-radius: 6px; pointer-events: none; }
    .report { width: 671px; max-width: 100%; height: 252px; }
    .emoji { display: inline-block; vertical-align: -5px; margin: -4px 7px -4px 0; }
    .key .emoji { margin: 0; }
    .down {
      position: absolute; right: 27px; bottom: 23px; display: grid; place-items: center; width: 65px; height: 65px;
      border-radius: 50%; background: #fff; color: #999; box-shadow: 0 1px 3px rgba(0, 0, 0, .4); padding-top: 4px;
    }
    .composer {
      display: flex; align-items: center; gap: 28px; height: 72px; flex: none; padding: 0 22px 0 21px;
      border-top: 1px solid #e7e7e7; background: #fff; color: #999;
    }
    .field { flex: 1; min-width: 0; border: 0; outline: 0; padding: 0; background: none; color: #222; font: inherit; font-size: 20px; height: 40px; }
    .field::placeholder { color: #a9a9a9; opacity: 1; }
    .actions { display: flex; align-items: center; gap: 36px; }
  `];

  render() {
    return html`
      <header class="top">
        <div>
          <h1 class="title">ЭПД Цифровые перевозки</h1>
          <p class="sub">бот</p>
        </div>
        <div class="tools">
          <button aria-label="Поиск">${icons.search}</button>
          <button class="on" aria-label="Панель">${icons.panel}</button>
          <button aria-label="Меню">${icons.dots}</button>
        </div>
      </header>
      <main class="stage">
        ${wallpaper()}
        <div class="feed">
          <span class="date">2 июля</span>
          <chat-message outgoing inline tail time="17:22"><a href="#start">/start</a></chat-message>
          <chat-message tail time="17:23">Добро пожаловать в сервис автоматической рассылки qr-code!<br>Введите номер телефона для активации подписки.<br><br>Пример: 0000000000</chat-message>
          <chat-message outgoing inline tail time="17:26"><a href="tel:9655181437">9655181437</a></chat-message>
          <chat-message inline tail time="17:27">${emojis.key}Укажите пароль для номера телефона "9655181437"</chat-message>
          <chat-message outgoing inline tail time="17:34">12345</chat-message>
          <div class="with-keys">
            <chat-message stretch time="17:35">${emojis.check}Подписка активирована!<br>Выберете доступные действия.</chat-message>
            <button class="key">${emojis.bus}Запросить актуальный QR</button>
            <button class="key">${emojis.pager}Передать значение одометра</button>
            <button class="key">${emojis.nophone}Активировать новый номер телефона<span class="mark"></span></button>
          </div>
          <chat-message class="report" open stretch>Путевой лист: № 00000000060 от 02.07.2025 17:41:42<br>Aurus, Aurus 1234, Гос номер: 457647<br>Водитель: Прокопенко Артемий Сергеевич<br>ВУ: серия 5&nbsp; номер 5<br>ЭПЛ действителен: с 02.07.2025 0:00:00 по 02.07.2025 23:59:59<br><br><a href="https://storage.yandexcloud.net/epd-api-qr-">https://storage.yandexcloud.net/epd-api-qr-</a></chat-message>
        </div>
        <button class="down" aria-label="Вниз">${icons.down}</button>
      </main>
      <footer class="composer">
        <button aria-label="Прикрепить">${icons.clip}</button>
        <input class="field" type="text" aria-label="Сообщение" placeholder="Сообщение...">
        <div class="actions">
          <button aria-label="Эмодзи">${icons.smile}</button>
          <button aria-label="Голосовое сообщение">${icons.mic}</button>
        </div>
      </footer>`;
  }
}

@customElement('bot-info')
class BotInfo extends LitElement {
  @state() private notify = true;

  static styles = [base, css`
    :host { background: #fff; color: #222; font-size: 20px; line-height: 30px; min-width: 0; min-height: 0; overflow: hidden; }
    .top { display: flex; align-items: center; justify-content: space-between; height: 84px; padding: 0 31px 0 37px; }
    .heading { font-size: 22px; font-weight: 600; }
    .close { color: #999; }
    .profile { display: flex; align-items: center; gap: 28px; height: 168px; padding: 0 29px 2px; }
    .avatar {
      display: grid; place-items: center; width: 113px; height: 113px; flex: none; border-radius: 50%;
      background: linear-gradient(#9ad164, #46ba43); color: #fff; font-size: 44px; font-weight: 600; line-height: 56px;
    }
    .name { padding-top: 4px; font-size: 25px; font-weight: 600; line-height: 38px; }
    .bot { line-height: 38px; }
    .muted { color: #999; }
    .gap { height: 12px; background: #f0f0f0; border-top: 2px solid #e3e3e3; }
    .row { display: flex; align-items: center; width: 100%; min-height: 60px; padding: 0 31px 0 38px; text-align: left; }
    .row > .icon, .slot { width: 36px; margin-right: 49px; flex: none; }
    .grow { flex: 1; }
    .user { height: 110px; }
    .blue { color: #3da1e0; display: block; }
    .qr { margin-right: 3px; }
    .lines { line-height: 33px; }
    .rule { height: 2px; margin: 0 0 0 120px; background: #ececec; }
    .notify { height: 87px; }
    .links { height: 97px; }
    .actions { padding: 11px 0; }
    .danger { color: #dc5a5c; }
    .split { margin-top: 12px; }
    .switch {
      appearance: none; position: relative; width: 47px; height: 22px; margin: 0; border-radius: 11px; background: #b5b5b5; cursor: pointer;
    }
    .switch::before {
      content: ''; position: absolute; top: -3px; left: 0; width: 28px; height: 28px; border: 3px solid #b5b5b5; border-radius: 50%; background: #fff;
    }
    .switch:checked { background: #3da1e0; }
    .switch:checked::before { left: 19px; border-color: #3da1e0; }
  `];

  private toggle(e: Event) {
    this.notify = (e.target as HTMLInputElement).checked;
  }

  render() {
    return html`
      <header class="top">
        <h2 class="heading">Информация о боте</h2>
        <button class="close" aria-label="Закрыть">${icons.close}</button>
      </header>
      <section class="profile">
        <div class="avatar">ЭП</div>
        <div>
          <p class="name">ЭПД Цифровые перевозки</p>
          <p class="bot muted">бот</p>
        </div>
      </section>
      <div class="gap"></div>
      <section>
        <div class="row user">
          ${icons.info}
          <div class="grow lines">
            <a class="blue" href="#QRcode_CP_bot">@QRcode_CP_bot</a>
            <span class="muted">Имя пользователя</span>
          </div>
          <button class="blue qr" aria-label="QR">${icons.qr}</button>
        </div>
        <div class="rule"></div>
        <div class="row notify">
          ${icons.bell}
          <label class="grow" for="notify">Уведомления</label>
          <input class="switch" id="notify" type="checkbox" .checked=${this.notify} @change=${this.toggle}>
        </div>
      </section>
      <div class="gap"></div>
      <button class="row links">${icons.link}<span>3 ссылки</span></button>
      <div class="gap"></div>
      <section class="actions">
        <button class="row">${icons.group}<span>Добавить в группу</span></button>
        <button class="row"><span class="slot"></span><span>Политика конфиденциальности бота</span></button>
        <button class="row danger split">${icons.alert}<span>Пожаловаться</span></button>
        <button class="row danger">${icons.hand}<span>Остановить и блокировать</span></button>
      </section>`;
  }
}

@customElement('app-root')
class AppRoot extends LitElement {
  static styles = [base, css`
    :host { height: 100vh; font-family: 'Open Sans', 'Noto Sans', sans-serif; background: #fff; }
    .window {
      display: grid; grid-template-columns: minmax(0, 872fr) minmax(0, 609fr); grid-template-rows: minmax(0, 1fr);
      height: 100%; border-bottom: 2px solid #8c8c8c; overflow: hidden;
    }
  `];

  render() {
    return html`
      <div class="window">
        <chat-view></chat-view>
        <bot-info></bot-info>
      </div>`;
  }
}
